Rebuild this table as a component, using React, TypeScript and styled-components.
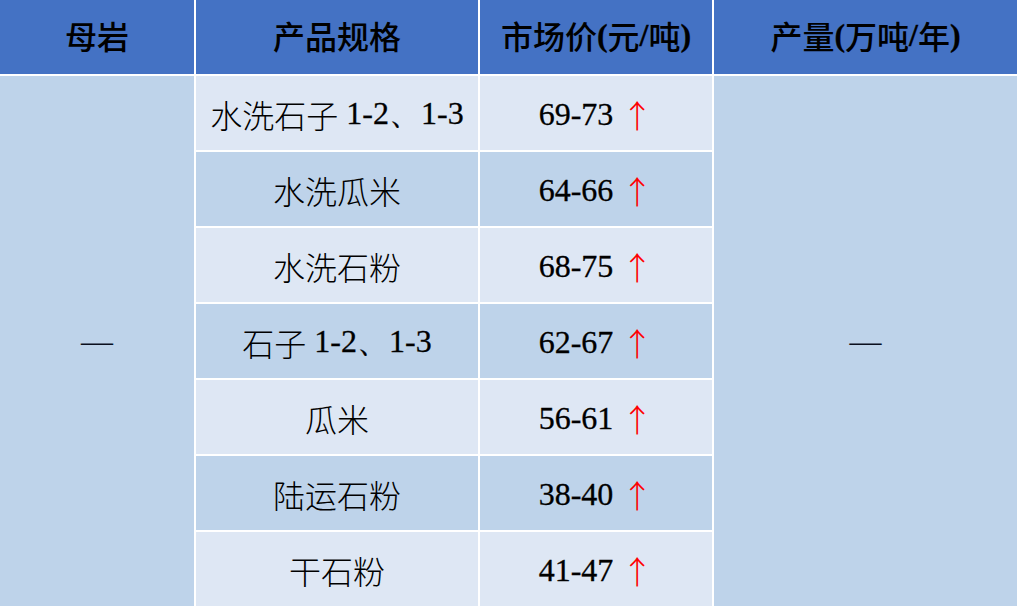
import React from 'react';
import styled, { createGlobalStyle } from 'styled-components';

const rows = [
  { spec: '水洗石子', size: ' 1-2、1-3', price: '69-73' },
  { spec: '水洗瓜米', size: '', price: '64-66' },
  { spec: '水洗石粉', size: '', price: '68-75' },
  { spec: '石子', size: ' 1-2、1-3', price: '62-67' },
  { spec: '瓜米', size: '', price: '56-61' },
  { spec: '陆运石粉', size: '', price: '38-40' },
  { spec: '干石粉', size: '', price: '41-47' },
];

// Style
const Global = createGlobalStyle`
  html, body {
    margin: 0;
    padding: 0;
    background: #fff;
  }
`;

const serif = `'Liberation Serif', 'Times New Roman', serif`;
const cjk = `'Noto Sans CJK SC', sans-serif`;

const Table = styled.div`
  display: grid;
  grid-template-columns: 194px 282px 232px 1fr;
  grid-template-rows: repeat(8, 74px);
  column-gap: 2px;
  row-gap: 2px;
  width: 1017px;
  height: 608px;
  background: #fff;
  color: #000;
  overflow: hidden;
`;

const HeadCell = styled.div`
  display: flex;
  align-items: center;
  justify-content: center;
  padding-bottom: 4px;
  background: #4472c4;
  font-family: ${cjk};
  font-size: 32px;
  font-weight: 500;
  white-space: nowrap;
`;

const Latin = styled.span<{ $weight?: number }>`
  font-family: ${serif};
  font-weight: ${(p) => p.$weight ?? 400};
  -webkit-text-stroke: 0.3px #000;
`;

const Cell = styled.div<{ $light: boolean }>`
  display: flex;
  align-items: center;
  justify-content: center;
  padding-top: 2px;
  background: ${(p) => (p.$light ? '#dee7f4' : '#bed3ea')};
  font-family: ${cjk};
  font-size: 32px;
  font-weight: 300;
  white-space: pre;
`;

const SpanCell = styled.div<{ $col: number }>`
  grid-column: ${(p) => p.$col};
  grid-row: 2 / span 7;
  display: flex;
  align-items: center;
  justify-content: center;
  background: #bed3ea;
  font-family: ${serif};
  font-size: 32px;
  color: #0a0f1e;
`;

const Arrow = styled.span`
  color: #ff0000;
  font-family: ${cjk};
  font-weight: 300;
`;

// Component
function App() {
  return (
    <>
      <Global />
      <Table>
        <HeadCell>母岩</HeadCell>
        <HeadCell>产品规格</HeadCell>
        <HeadCell>
          市场价<Latin $weight={700}>(</Latin>元<Latin $weight={700}>/</Latin>吨<Latin $weight={700}>)</Latin>
        </HeadCell>
        <HeadCell>
          产量<Latin $weight={700}>(</Latin>万吨<Latin $weight={700}>/</Latin>年<Latin $weight={700}>)</Latin>
        </HeadCell>
        <SpanCell $col={1}>—</SpanCell>
        <SpanCell $col={4}>—</SpanCell>
        {rows.map((r, i) => (
          <React.Fragment key={r.spec}>
            <Cell $light={i % 2 === 0} style={{ gridColumn: 2, gridRow: i + 2 }}>
              {r.spec}
              {r.size && <Latin>{r.size}</Latin>}
            </Cell>
            <Cell $light={i % 2 === 0} style={{ gridColumn: 3, gridRow: i + 2 }}>
              <Latin>{r.price} </Latin>
              <Arrow>↑</Arrow>
            </Cell>
          </React.Fragment>
        ))}
      </Table>
    </>
  );
}

export default App;
